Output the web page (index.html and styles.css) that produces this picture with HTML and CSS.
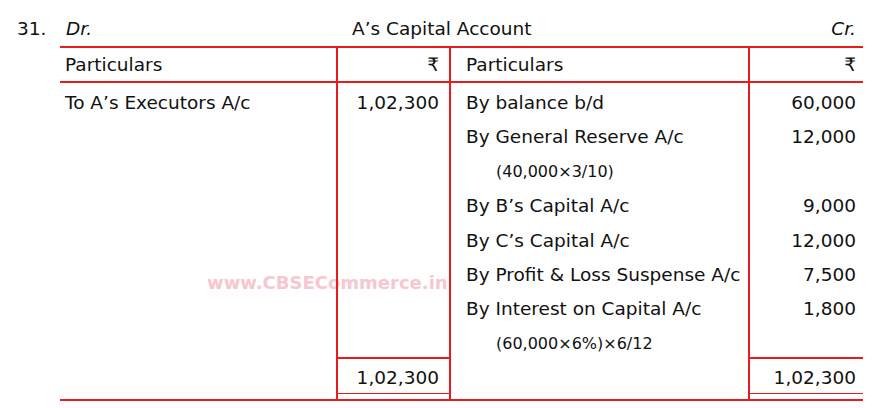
FILE: index.html
```html
<!DOCTYPE html>
<html lang="en">
<head>
<meta charset="utf-8">
<title>A's Capital Account</title>
<link rel="stylesheet" href="styles.css">
</head>
<body>
<div class="page">
  <div class="qno">31.</div>
  <div class="account">
    <div class="heading">
      <span class="dr">Dr.</span>
      <span class="title">A’s Capital Account</span>
      <span class="cr">Cr.</span>
    </div>
    <div class="ledger">
      <div class="cell c1 head">Particulars</div>
      <div class="cell c2 head amt">₹</div>
      <div class="cell c3 head">Particulars</div>
      <div class="cell c4 head amt">₹</div>

      <div class="cell c1 body">
        <div class="line">To A’s Executors A/c</div>
      </div>
      <div class="cell c2 body amt">
        <div class="line">1,02,300</div>
      </div>
      <div class="cell c3 body">
        <div class="line">By balance b/d</div>
        <div class="line">By General Reserve A/c</div>
        <div class="line sub">(40,000×3/10)</div>
        <div class="line">By B’s Capital A/c</div>
        <div class="line">By C’s Capital A/c</div>
        <div class="line">By Profit &amp; Loss Suspense A/c</div>
        <div class="line">By Interest on Capital A/c</div>
        <div class="line sub">(60,000×6%)×6/12</div>
      </div>
      <div class="cell c4 body amt">
        <div class="line">60,000</div>
        <div class="line">12,000</div>
        <div class="line"></div>
        <div class="line">9,000</div>
        <div class="line">12,000</div>
        <div class="line">7,500</div>
        <div class="line">1,800</div>
        <div class="line"></div>
      </div>

      <div class="cell c1 total-blank"></div>
      <div class="cell c2 total amt">1,02,300</div>
      <div class="cell c3 total-blank"></div>
      <div class="cell c4 total amt">1,02,300</div>

      <div class="cell c1 gap"></div>
      <div class="cell c2 gap"></div>
      <div class="cell c3 gap"></div>
      <div class="cell c4 gap"></div>
    </div>
    <div class="watermark">www.CBSECommerce.in</div>
  </div>
</div>
</body>
</html>
```

FILE: styles.css
```css
* {
  box-sizing: border-box;
}

html {
  background: #ffffff;
}

html, body {
  margin: 0;
  padding: 0;
}

body {
  font-family: "DejaVu Sans", "Noto Sans", sans-serif;
  font-size: 18.5px;
  color: #111111;
}

.page {
  display: flex;
  padding-left: 17px;
  width: 895px;
  height: 408px;
  overflow: hidden;
}

.qno {
  width: 43px;
  padding-top: 12px;
  line-height: 34px;
  font-family: "DejaVu Sans", sans-serif;
  font-size: 18.5px;
}

.account {
  position: relative;
  width: 803px;
}

.heading {
  display: flex;
  height: 46px;
  padding-top: 12px;
  line-height: 34px;
}

.dr {
  width: 292px;
  padding-left: 6px;
  font-style: italic;
}

.title {
  flex: 1;
}

.cr {
  padding-right: 7px;
  font-style: italic;
}

.ledger {
  display: grid;
  grid-template-columns: 278px 113px 299px 113px;
  grid-template-rows: 35px 274px 37px 5px;
  border-top: 2px solid #ea1a1f;
  border-bottom: 2px solid #ea1a1f;
}

.cell {
  white-space: nowrap;
}

.c1, .c2, .c3 {
  border-right: 2px solid #ea1a1f;
}

.c1 {
  padding-left: 5px;
}

.c2 {
  padding-right: 10px;
}

.c3 {
  padding-left: 15px;
}

.c4 {
  padding-right: 7px;
}

.amt {
  text-align: right;
}

.head {
  border-bottom: 2px solid #ea1a1f;
  line-height: 33px;
}

.body {
  padding-top: 3px;
}

.line {
  height: 34.4px;
  line-height: 34.4px;
}

.line.sub {
  padding-left: 30px;
  font-size: 16px;
}

.total {
  border-top: 2px solid #ea1a1f;
  border-bottom: 1px solid #ea1a1f;
  line-height: 34px;
  padding-top: 2px;
}

.watermark {
  position: absolute;
  left: 147px;
  top: 270px;
  z-index: -1;
  font-family: "DejaVu Sans", sans-serif;
  font-weight: bold;
  font-size: 18px;
  line-height: 26px;
  color: #f6c7d0;
  white-space: nowrap;
}
```
